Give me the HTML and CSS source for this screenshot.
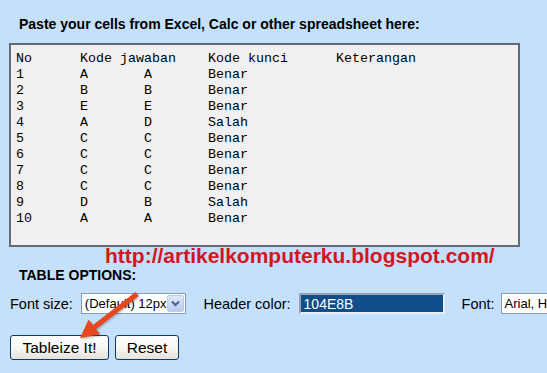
FILE: index.html
```html
<!DOCTYPE html>
<html lang="en">
<head>
    <meta charset="UTF-8">
    <title>Tableizer</title>
    <link rel="stylesheet" href="styles.css">
</head>
<body>
<div class="page">
    <h2 class="title">Paste your cells from Excel, Calc or other spreadsheet here:</h2>

    <textarea class="cells" spellcheck="false">No	Kode jawaban	Kode kunci	Keterangan
1	A	A	Benar
2	B	B	Benar
3	E	E	Benar
4	A	D	Salah
5	C	C	Benar
6	C	C	Benar
7	C	C	Benar
8	C	C	Benar
9	D	B	Salah
10	A	A	Benar
</textarea>

    <div class="watermark">http://artikelkomputerku.blogspot.com/</div>

    <h3 class="options-title">TABLE OPTIONS:</h3>

    <div class="options-row">
        <span class="label">Font size:</span>
        <span class="select size-select">
            <span class="select-text">(Default) 12px</span>
            <span class="select-btn">
                <svg width="9" height="7" viewBox="0 0 9 7"><path d="M1 1.5 L4.5 5 L8 1.5" fill="none" stroke="#4d6185" stroke-width="2"/></svg>
            </span>
        </span>

        <span class="label">Header color:</span>
        <input class="color-input" type="text" value="104E8B">

        <span class="label">Font:</span>
        <span class="select font-select">
            <span class="select-text">Arial, Helvetica, sans-serif</span>
        </span>
    </div>

    <div class="buttons">
        <button class="btn btn-go">Tableize It!</button>
        <button class="btn btn-reset">Reset</button>
    </div>

    <!-- flecha roja sobre el formulario -->
    <svg class="arrow" width="547" height="373" viewBox="0 0 547 373">
        <polygon points="135.5,292 93,325 88.5,319.8 80,338 100,334.2 95.8,329 138.5,296" fill="#e8461d"/>
    </svg>
</div>
</body>
</html>
```

FILE: styles.css
```css
/* Estilos generales */
body {
    margin: 0;
    background-color: #c5e0fb;
    font-family: "Liberation Sans", Arial, sans-serif;
    overflow: hidden;
}

.page {
    position: relative;
    width: 700px;
    padding: 16px 0 0 9px;
}

.title {
    margin: 0 0 11px 10px;
    font-size: 14px;
    line-height: 16px;
    font-weight: bold;
    color: #000;
}

/* Cuadro de texto */
.cells {
    display: block;
    box-sizing: border-box;
    width: 511px;
    height: 204px;
    margin: 0;
    padding: 6px 5px;
    border: 2px solid #636a74;
    background-color: #f0f0f0;
    font-family: "Liberation Mono", "Courier New", monospace;
    font-size: 13.333px;
    line-height: 16px;
    tab-size: 8;
    color: #000;
    resize: none;
    overflow: hidden;
}

.watermark {
    margin-top: -2px;
    padding-left: 96px;
    font-size: 21px;
    line-height: 22px;
    font-weight: bold;
    color: #d3161e;
}

.options-title {
    margin: 0 0 10px 10px;
    font-size: 14px;
    line-height: 16px;
    font-weight: bold;
}

/* Fila de opciones */
.options-row {
    display: flex;
    align-items: center;
    height: 21px;
    padding-left: 1px;
    white-space: nowrap;
    font-size: 14.5px;
}

.label {
    margin-right: 8px;
}

.select {
    display: flex;
    align-items: center;
    box-sizing: border-box;
    height: 21px;
    border: 1px solid #7f9db9;
    background-color: #fff;
    margin-right: 18px;
}

.select-text {
    padding-left: 3px;
    flex: 1;
    font-size: 13px;
}

.size-select {
    width: 109px;
}

.select-btn {
    display: flex;
    align-items: center;
    justify-content: center;
    flex: none;
    width: 15px;
    height: 15px;
    margin-right: 1px;
    border: 1px solid #bacbef;
    border-radius: 2px;
    background: linear-gradient(#dde7fc, #b9cbf3);
}

.color-input {
    box-sizing: border-box;
    width: 146px;
    height: 21px;
    margin: 0 17px 0 0;
    padding: 0 3px;
    border: 2px solid;
    border-color: #98a2ae #e9eef6 #e9eef6 #98a2ae;
    background-color: #104e8b;
    color: #fff;
    font-family: "Liberation Sans", Arial, sans-serif;
    font-size: 14px;
}

.font-select {
    width: 200px;
    margin-left: -2px;
}

/* Botones */
.buttons {
    display: flex;
    gap: 6px;
    margin-top: 21px;
    padding-left: 1px;
}

.btn {
    box-sizing: border-box;
    height: 25px;
    padding: 0;
    border: 1px solid #0f3a66;
    border-radius: 3px;
    background: linear-gradient(#ffffff, #f4f4f0 60%, #e3e2da);
    font-family: "Liberation Sans", Arial, sans-serif;
    font-size: 15.5px;
    color: #000;
}

.btn-go {
    width: 99px;
}

.btn-reset {
    width: 64px;
}

.arrow {
    position: absolute;
    left: 0;
    top: 0;
    pointer-events: none;
    filter: drop-shadow(1px 1px 1px rgba(90, 60, 40, 0.5));
}
```
